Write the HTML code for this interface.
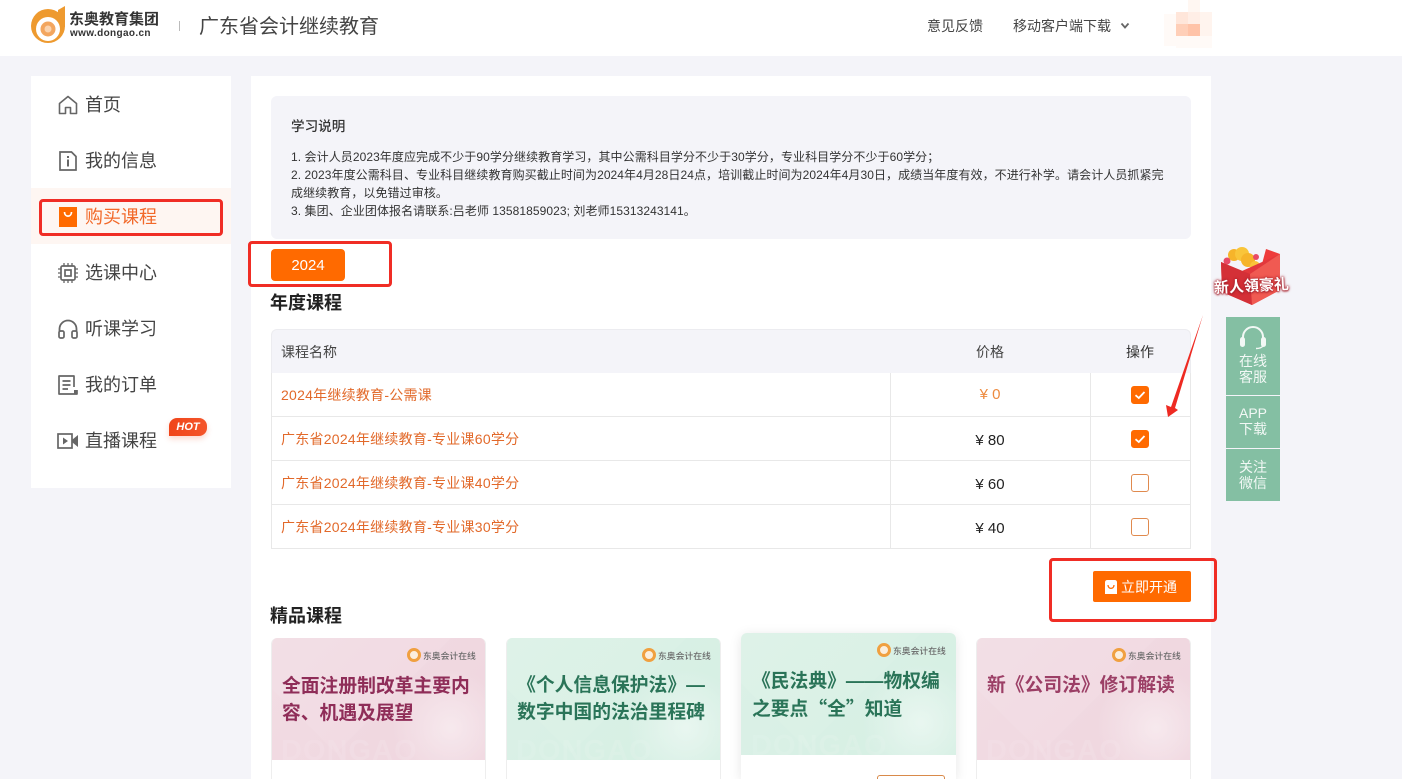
<!DOCTYPE html>
<html lang="zh-CN">
<head>
<meta charset="utf-8">
<title>广东省会计继续教育</title>
<style>
*{box-sizing:border-box;margin:0;padding:0}
html,body{width:1402px;height:779px;overflow:hidden;background:#f4f4f9;font-family:"Liberation Sans","Noto Sans CJK SC",sans-serif;color:#333}
#wrap{position:absolute;left:0;top:0;width:1402px;height:779px;overflow:hidden;background:#f4f4f9}
.a{position:absolute;white-space:nowrap}
svg{position:absolute;overflow:visible}
.nav{position:absolute;left:85px;font-size:18px;line-height:26px;color:#444;white-space:nowrap}
.cell{position:absolute;font-size:14px;line-height:20px;white-space:nowrap}
.cname{left:281px;color:#e2692a;letter-spacing:.25px}
.price{left:890px;width:200px;text-align:center;color:#222;font-size:15px}
.hl{position:absolute;left:271px;width:920px;height:1px;background:#e8e8e8}
.vl{position:absolute;width:1px;background:#e8e8e8}
.ck{position:absolute;left:1131px;width:18px;height:18px;border-radius:3px;border:1px solid #e08a4e;background:#fff}
.ck.on{background:#ff6a00;border-color:#ff6a00}
.redbox{position:absolute;border:3px solid #f02d25;border-radius:4px}
.card{position:absolute;width:215px;background:#fff;overflow:hidden;border-radius:6px 6px 0 0}
.cimg{position:absolute;left:0;top:0;width:215px;height:122px;overflow:hidden}
.ct{position:absolute;left:11px;font-size:18.8px;line-height:27px;font-weight:700;white-space:nowrap}
.q{font-family:"Noto Sans CJK SC",sans-serif}
.brand{position:absolute;left:137px;top:11px;font-size:8.8px;line-height:14px;font-weight:500;color:#6a6a6a;white-space:nowrap;padding-left:15px}
.brand i{position:absolute;left:-1px;top:-1px;width:14px;height:14px;border-radius:50%;border:3px solid #f0a040;background:#fbeedd}
.wm{position:absolute;left:10px;top:98px;font-size:29px;line-height:30px;font-weight:700;letter-spacing:1px;color:rgba(255,255,255,.1);white-space:nowrap}
.glow{position:absolute;left:120px;top:30px;width:120px;height:120px;border-radius:50%;background:radial-gradient(circle,rgba(255,255,255,.45),rgba(255,255,255,0) 70%)}
.dg{position:absolute;left:-20px;top:-90px;width:170px;height:170px;transform:rotate(45deg);background:rgba(255,255,255,.07)}
.side{position:absolute;left:1226px;width:54px;background:#84bfa3;color:#f2f8f5;font-size:14px;line-height:16px;text-align:center}
</style>
</head>
<body>
<div id="wrap">

<!-- header -->
<div class="a" style="left:0;top:0;width:1402px;height:56px;background:#fff"></div>
<svg style="left:30px;top:5px" width="40" height="40" viewBox="0 0 40 40">
  <circle cx="18" cy="21" r="17" fill="#ee9a2f"/>
  <path d="M28 5 L35 1 V22 H28 Z" fill="#ee9a2f"/>
  <circle cx="18" cy="24" r="12" fill="#fff"/>
  <circle cx="18" cy="24" r="7.5" fill="#f3a65f"/>
  <circle cx="18" cy="24" r="3.5" fill="#fbd3ae"/>
</svg>
<div class="a" style="left:69px;top:11px;font-size:15px;line-height:18px;font-weight:700;color:#333">东奥教育集团</div>
<div class="a" style="left:70px;top:28px;font-size:10px;line-height:12px;font-weight:700;color:#333;letter-spacing:.35px">www.dongao.cn</div>
<div class="a" style="left:179px;top:21px;width:1px;height:10px;background:#bbb"></div>
<div class="a" style="left:199px;top:13px;font-size:20px;line-height:28px;color:#444">广东省会计继续教育</div>
<div class="a" style="left:927px;top:16px;font-size:14px;line-height:20px;color:#444">意见反馈</div>
<div class="a" style="left:1013px;top:16px;font-size:14px;line-height:20px;color:#444">移动客户端下载</div>
<svg style="left:1120px;top:22px" width="10" height="8" viewBox="0 0 10 8"><path d="M1.5 1.5 L5 5.5 L8.5 1.5" fill="none" stroke="#666" stroke-width="1.8"/></svg>
<div class="a" style="left:1164px;top:14px;width:12px;height:32px;background:#fffaf7"></div>
<div class="a" style="left:1188px;top:0;width:12px;height:12px;background:#fff7f2"></div>
<div class="a" style="left:1176px;top:36px;width:36px;height:12px;background:#fffaf7"></div>
<div class="a" style="left:1176px;top:12px;width:12px;height:12px;background:#ffe6da"></div>
<div class="a" style="left:1188px;top:12px;width:12px;height:12px;background:#ffeee6"></div>
<div class="a" style="left:1200px;top:12px;width:12px;height:12px;background:#fff4ee"></div>
<div class="a" style="left:1176px;top:24px;width:12px;height:12px;background:#ffcfb8"></div>
<div class="a" style="left:1188px;top:24px;width:12px;height:12px;background:#ffc3a8"></div>
<div class="a" style="left:1200px;top:24px;width:12px;height:12px;background:#fff4ee"></div>

<!-- sidebar -->
<div class="a" style="left:31px;top:76px;width:200px;height:412px;background:#fff"></div>
<div class="a" style="left:31px;top:188px;width:200px;height:56px;background:#fef6f2"></div>

<svg style="left:58px;top:95px" width="20" height="20" viewBox="0 0 20 20"><path d="M1.5 8.5 L10 1.5 L18.5 8.5 V18.5 H12.5 V12.5 H7.5 V18.5 H1.5 Z" fill="none" stroke="#666" stroke-width="1.6" stroke-linejoin="round"/></svg>
<div class="nav" style="top:92px">首页</div>

<svg style="left:59px;top:151px" width="18" height="20" viewBox="0 0 18 20"><path d="M1 1 H12.5 L17 5.5 V19 H1 Z" fill="none" stroke="#666" stroke-width="1.7"/><rect x="8" y="8.5" width="2" height="7" fill="#666"/><rect x="8" y="5" width="2" height="2" fill="#666"/></svg>
<div class="nav" style="top:148px">我的信息</div>

<svg style="left:59px;top:207px" width="18" height="20" viewBox="0 0 18 20"><rect width="18" height="20" fill="#ff6a00"/><path d="M5.5 5 C5.5 10.5 12.5 10.5 12.5 5" fill="none" stroke="#fff" stroke-width="1.7"/></svg>
<div class="nav" style="top:204px;color:#f2692a">购买课程</div>
<div class="redbox" style="left:39px;top:199px;width:184px;height:37px"></div>

<svg style="left:58px;top:263px" width="20" height="20" viewBox="0 0 20 20"><rect x="3" y="3" width="14" height="14" rx="1.5" fill="none" stroke="#666" stroke-width="1.7"/><rect x="7" y="7" width="6" height="6" fill="none" stroke="#666" stroke-width="1.7"/><path d="M6 0 V3 M10 0 V3 M14 0 V3 M6 17 V20 M10 17 V20 M14 17 V20 M0 6 H3 M0 10 H3 M0 14 H3 M17 6 H20 M17 10 H20 M17 14 H20" stroke="#666" stroke-width="1.3"/></svg>
<div class="nav" style="top:260px">选课中心</div>

<svg style="left:58px;top:319px" width="20" height="20" viewBox="0 0 20 20"><path d="M1.5 13 V10 A8.5 8.5 0 0 1 18.5 10 V13" fill="none" stroke="#666" stroke-width="1.8"/><rect x="1" y="12" width="5" height="7" rx="1.5" fill="none" stroke="#666" stroke-width="1.7"/><rect x="14" y="12" width="5" height="7" rx="1.5" fill="none" stroke="#666" stroke-width="1.7"/></svg>
<div class="nav" style="top:316px">听课学习</div>

<svg style="left:58px;top:375px" width="20" height="20" viewBox="0 0 20 20"><path d="M16 12 V1 H1 V19 H19 V15" fill="none" stroke="#666" stroke-width="1.7" stroke-linejoin="round"/><path d="M4.5 6 H12.5 M4.5 10 H12.5 M4.5 14 H10" stroke="#666" stroke-width="1.7"/><rect x="16" y="15" width="3.5" height="4" fill="#666"/></svg>
<div class="nav" style="top:372px">我的订单</div>

<svg style="left:57px;top:433px" width="22" height="16" viewBox="0 0 22 16"><rect x="1" y="1" width="14" height="14" fill="none" stroke="#666" stroke-width="1.7"/><path d="M6 4.5 L11 8 L6 11.5 Z" fill="#666"/><path d="M15.5 6.5 L21 2 V14 L15.5 9.5 Z" fill="#666"/></svg>
<div class="nav" style="top:428px">直播课程</div>
<div class="a" style="left:169px;top:418px;width:38px;height:18px;background:linear-gradient(90deg,#f0451a,#f4552a);border-radius:8px 8px 8px 0;color:#fff;font-size:11px;line-height:18px;font-weight:700;font-style:italic;text-align:center;box-shadow:0 3px 6px rgba(240,80,40,.22)">HOT</div>

<!-- main panel -->
<div class="a" style="left:251px;top:76px;width:960px;height:703px;background:#fff"></div>
<div class="a" style="left:271px;top:96px;width:920px;height:143px;background:#f4f4f9;border-radius:6px"></div>
<div class="a" style="left:291px;top:118px;font-size:13.6px;line-height:18px;font-weight:500;color:#333">学习说明</div>
<div class="a" style="left:291px;top:148px;width:890px;font-size:12px;line-height:18px;color:#333;white-space:nowrap;letter-spacing:.07px">
1. 会计人员2023年度应完成不少于90学分继续教育学习，其中公需科目学分不少于30学分，专业科目学分不少于60学分；<br>
2. 2023年度公需科目、专业科目继续教育购买截止时间为2024年4月28日24点，培训截止时间为2024年4月30日，成绩当年度有效，不进行补学。请会计人员抓紧完<br>
成继续教育，以免错过审核。<br>
3. 集团、企业团体报名请联系:吕老师 13581859023; 刘老师15313243141。
</div>

<div class="a" style="left:271px;top:249px;width:74px;height:32px;background:#ff6a00;border-radius:4px;color:#fff;font-size:15px;line-height:33px;text-align:center">2024</div>
<div class="redbox" style="left:248px;top:241px;width:144px;height:46px"></div>
<div class="a" style="left:270px;top:291px;font-size:18px;line-height:24px;font-weight:700;color:#222">年度课程</div>

<!-- table -->
<div class="a" style="left:271px;top:329px;width:920px;height:44px;background:#f4f4f9;border-radius:6px 6px 0 0;border-top:1px solid #ececf0;border-left:1px solid #ececf0;border-right:1px solid #ececf0"></div>
<div class="cell" style="left:281px;top:342px;color:#444">课程名称</div>
<div class="cell" style="left:890px;width:200px;text-align:center;top:342px;color:#444">价格</div>
<div class="cell" style="left:1090px;width:100px;text-align:center;top:342px;color:#333">操作</div>

<div class="vl" style="left:271px;top:373px;height:176px"></div>
<div class="vl" style="left:890px;top:373px;height:176px"></div>
<div class="vl" style="left:1090px;top:373px;height:176px"></div>
<div class="vl" style="left:1190px;top:373px;height:176px"></div>
<div class="hl" style="top:416px"></div>
<div class="hl" style="top:460px"></div>
<div class="hl" style="top:504px"></div>
<div class="hl" style="top:548px"></div>

<div class="cell cname" style="top:385px">2024年继续教育-公需课</div>
<div class="cell cname" style="top:429px">广东省2024年继续教育-专业课60学分</div>
<div class="cell cname" style="top:473px">广东省2024年继续教育-专业课40学分</div>
<div class="cell cname" style="top:517px">广东省2024年继续教育-专业课30学分</div>

<div class="cell price" style="top:385px;color:#ed8a3e">¥ 0</div>
<div class="cell price" style="top:431px">¥ 80</div>
<div class="cell price" style="top:475px">¥ 60</div>
<div class="cell price" style="top:519px">¥ 40</div>

<div class="ck on" style="top:386px"></div>
<svg style="left:1131px;top:386px" width="18" height="18" viewBox="0 0 18 18"><path d="M4.5 9.2 L7.8 12 L13.5 6" fill="none" stroke="#fff" stroke-width="1.8"/></svg>
<div class="ck on" style="top:430px"></div>
<svg style="left:1131px;top:430px" width="18" height="18" viewBox="0 0 18 18"><path d="M4.5 9.2 L7.8 12 L13.5 6" fill="none" stroke="#fff" stroke-width="1.8"/></svg>
<div class="ck" style="top:474px"></div>
<div class="ck" style="top:518px"></div>

<!-- open button -->
<div class="a" style="left:1093px;top:571px;width:98px;height:31px;background:#ff6a00;border-radius:2px"></div>
<svg style="left:1105px;top:580px" width="12" height="14" viewBox="0 0 12 14"><path d="M0 2.5 Q0 0 2.5 0 H9.5 Q12 0 12 2.5 V14 H0 Z" fill="#fff"/><path d="M3 5 C3 9.5 9 9.5 9 5" fill="none" stroke="#ff6a00" stroke-width="1.3"/></svg>
<div class="a" style="left:1121px;top:577px;font-size:14px;line-height:20px;color:#fff">立即开通</div>
<div class="redbox" style="left:1049px;top:558px;width:168px;height:64px"></div>

<div class="a" style="left:270px;top:604px;font-size:18px;line-height:24px;font-weight:700;color:#222">精品课程</div>

<!-- cards -->
<div class="card" style="left:271px;top:638px;height:141px;border-left:1px solid #eee;border-right:1px solid #eee">
  <div class="cimg" style="left:-1px;background:linear-gradient(135deg,#f2dde4,#efd5de)">
    <div class="dg"></div><div class="glow"></div>
    <div class="brand"><i></i>东奥会计在线</div>
    <div class="ct" style="top:34px;color:#8f2d58">全面注册制改革主要内<br>容、机遇及展望</div>
    <div class="wm">DONGAO</div>
  </div>
</div>
<div class="card" style="left:506px;top:638px;height:141px;border-left:1px solid #eee;border-right:1px solid #eee">
  <div class="cimg" style="left:-1px;background:linear-gradient(135deg,#dcf1e7,#d5efe3)">
    <div class="dg"></div><div class="glow"></div>
    <div class="brand"><i></i>东奥会计在线</div>
    <div class="ct" style="top:33px;left:10px;color:#2a7458;width:190px;text-align:center">《个人信息保护法》—<br>数字中国的法治里程碑</div>
    <div class="wm">DONGAO</div>
  </div>
</div>
<div class="card" style="left:741px;top:633px;height:146px;box-shadow:0 2px 12px rgba(0,0,0,.1);overflow:visible">
  <div class="cimg" style="background:linear-gradient(135deg,#dcf1e7,#d5efe3);border-radius:6px 6px 0 0">
    <div class="dg"></div><div class="glow"></div>
    <div class="brand"><i></i>东奥会计在线</div>
    <div class="ct" style="top:34px;color:#2a7458">《民法典》——物权编<br>之要点<span class="q">“</span>全<span class="q">”</span>知道</div>
    <div class="wm">DONGAO</div>
  </div>
  <div class="a" style="left:136px;top:142px;width:68px;height:4px;border:1px solid #d98a4a;border-bottom:0;border-radius:3px 3px 0 0"></div>
</div>
<div class="card" style="left:976px;top:638px;height:141px;border-left:1px solid #eee;border-right:1px solid #eee">
  <div class="cimg" style="left:-1px;background:linear-gradient(135deg,#f2dde4,#efd5de)">
    <div class="dg"></div><div class="glow"></div>
    <div class="brand"><i></i>东奥会计在线</div>
    <div class="ct" style="top:33px;color:#9c3f66">新《公司法》修订解读</div>
    <div class="wm">DONGAO</div>
  </div>
</div>

<!-- red arrow -->
<svg style="left:1160px;top:310px" width="50" height="112" viewBox="0 0 50 112"><path d="M43 5 L15 98 L18 100 L8 107 L6 95 L11 97 Z" fill="#ee2a22"/></svg>

<!-- gift -->
<svg style="left:1212px;top:244px" width="80" height="64" viewBox="0 0 80 64">
  <path d="M54 5 L68 10 L62 24 L50 20 Z" fill="#ee3b3b"/>
  <circle cx="22" cy="11" r="6" fill="#f6b42a"/><circle cx="30" cy="10" r="7" fill="#f9c53a"/><circle cx="36" cy="16" r="7" fill="#f6b42a"/><circle cx="43" cy="22" r="5" fill="#f9c53a"/>
  <circle cx="15" cy="17" r="3.5" fill="#e84a66"/><circle cx="44" cy="13" r="3" fill="#e84a66"/>
  <path d="M9 18 L30 27 L68 10 L68 46 L40 61 L10 48 Z" fill="#e2383c"/>
  <path d="M9 18 L38 30 L40 61 L10 48 Z" fill="#d43037"/>
  <path d="M38 30 L68 10 L68 46 L40 61 Z" fill="#f05a52"/>
</svg>
<div class="a" style="left:1214px;top:277px;font-size:15px;line-height:20px;font-weight:700;color:#fff;text-shadow:0 0 2px #a92530,0 0 3px #a92530,0 1px 2px #a92530;transform:rotate(-3deg)">新人領豪礼</div>

<!-- side tools -->
<div class="side" style="top:317px;height:78px;padding-top:36px">在线<br>客服</div>
<svg style="left:1239px;top:326px" width="28" height="24" viewBox="0 0 28 24"><path d="M4 13 V11 A10 10 0 0 1 24 11 V13" fill="none" stroke="#f2f8f5" stroke-width="2"/><rect x="1" y="11" width="5" height="10" rx="2.5" fill="#f2f8f5"/><rect x="22" y="11" width="5" height="10" rx="2.5" fill="#f2f8f5"/><path d="M24 20 Q22 22.5 17 22.5" fill="none" stroke="#f2f8f5" stroke-width="1.4"/></svg>
<div class="side" style="top:396px;height:52px;padding-top:9px">APP<br>下载</div>
<div class="side" style="top:449px;height:52px;padding-top:10px">关注<br>微信</div>

</div>
</body>
</html>
